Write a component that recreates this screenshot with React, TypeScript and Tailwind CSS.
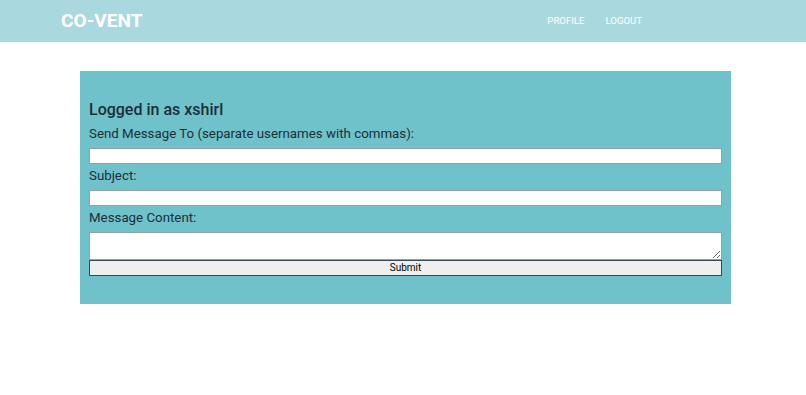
import React from "react";

export default function App() {
  return (
    <div className="min-h-[395px] bg-white font-['Roboto',Arial,sans-serif]">
      <header className="flex h-[42px] items-center justify-between bg-[#a9d9df] pl-[61px] pr-[164px]">
        <div className="text-[19px] font-bold tracking-[0.1px] text-white">CO-VENT</div>
        <nav className="flex gap-[21px] text-[9.6px] text-white">
          <span>PROFILE</span>
          <span>LOGOUT</span>
        </nav>
      </header>

      <div className="mx-[80px] mt-[29px] w-[651px] bg-[#6fc2ca] px-[9px] pb-[28px] pt-[29px] text-[#1c2e38]">
        <h2 className="mb-[5px] text-[16px] font-medium leading-[20px]">Logged in as xshirl</h2>
        <form className="flex flex-col">
          <label className="mb-[5px] text-[13.3px] leading-[18px]">
            Send Message To (separate usernames with commas):
          </label>
          <input className="h-[16px] w-full border border-[#8fa3a7] bg-white" />
          <label className="mb-[5px] mt-[3px] text-[13.3px] leading-[18px]">Subject:</label>
          <input className="h-[16px] w-full border border-[#8fa3a7] bg-white" />
          <label className="mb-[5px] mt-[3px] text-[13.3px] leading-[18px]">Message Content:</label>
          <textarea className="block h-[28px] w-full resize-y border border-[#8fa3a7] bg-white" />
          <button
            type="button"
            className="h-[16px] w-full border border-[#3a4a50] bg-[#efefef] text-[10px] leading-[14px] text-black"
          >
            Submit
          </button>
        </form>
      </div>
    </div>
  );
}
